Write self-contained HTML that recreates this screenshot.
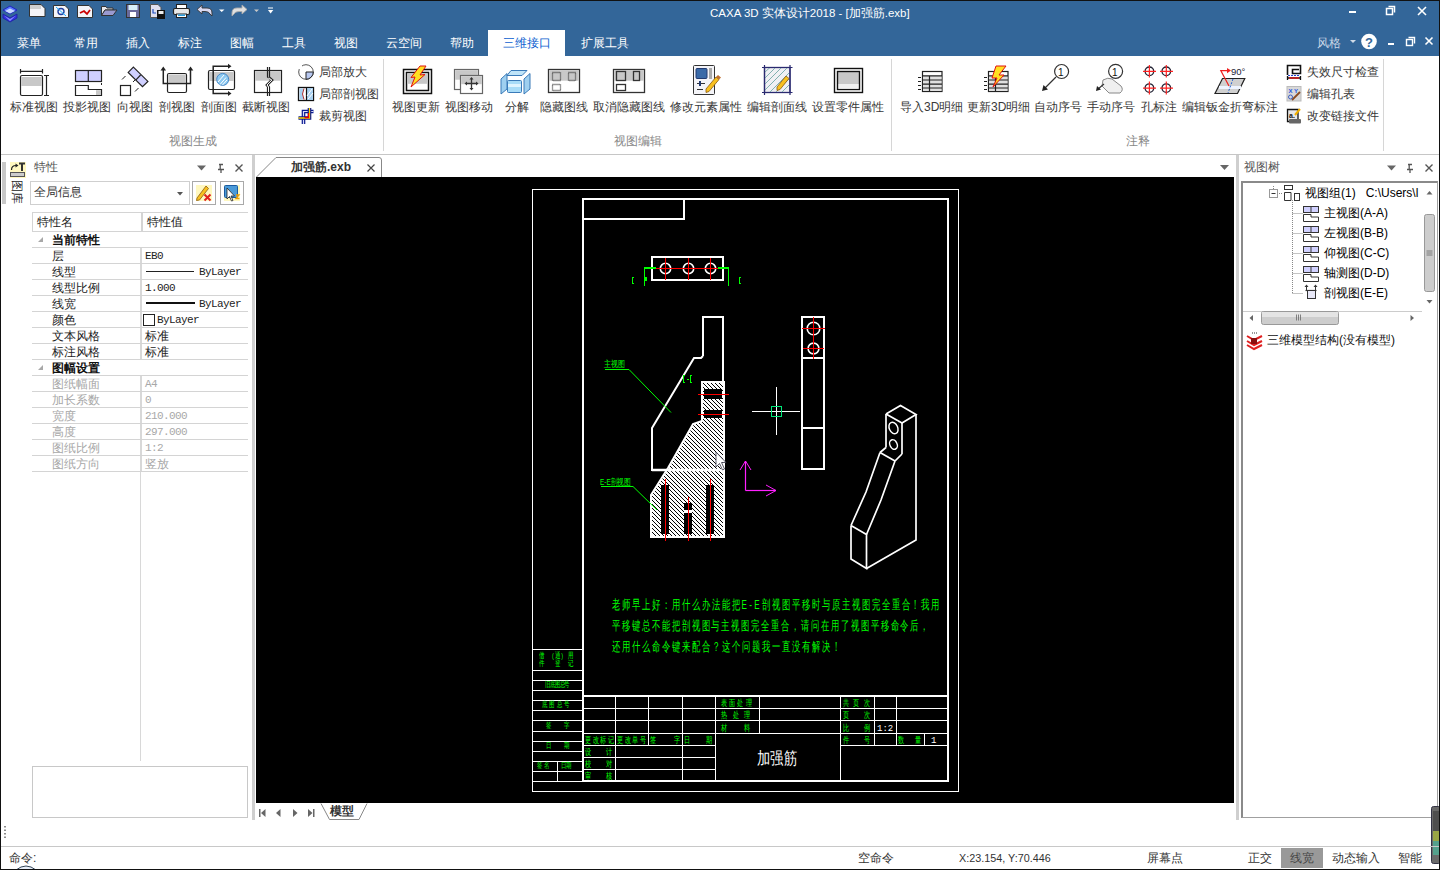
<!DOCTYPE html>
<html><head><meta charset="utf-8">
<style>
*{box-sizing:border-box;margin:0;padding:0}
html,body{width:1440px;height:870px;overflow:hidden;background:#fff;font-family:"Liberation Sans",sans-serif;font-size:12px;color:#333}
.a{position:absolute;white-space:nowrap}
#title{left:0;top:0;width:1440px;height:56px;background:#336699}
.tab{top:36px;height:14px;line-height:14px;color:#fff;font-size:12px}
.rl{top:101px;line-height:13px;color:#383838;font-size:12px;text-align:center}
.sl{line-height:13px;color:#383838;font-size:12px}
.gl{top:135px;line-height:13px;color:#888;font-size:12px}
.vsep{width:1px;background:#d6d6d6;top:59px;height:92px}
.pr{left:32px;width:216px;height:16px;border-bottom:1px solid #d4d4d4}
.pn{position:absolute;left:20px;top:1px;line-height:14px;font-size:12px;color:#222}
.pv{line-height:14px;font-size:11px;letter-spacing:-0.6px;color:#222;font-family:"Liberation Mono",monospace}
.pcol{position:absolute;left:108px;top:0;width:2px;height:16px;background:#d4d4d4}
.dis .pn,.dis .pv{color:#a8a8a8}
.tv{left:1324px;line-height:14px;font-size:12px;color:#000}
.sb{top:851px;line-height:14px;font-size:12px;color:#333}
</style></head><body>
<!-- window border -->

<div class="a" id="title"></div>
<div class="a" style="left:0;top:0;width:1440px;height:1px;background:#111"></div>

<!-- title text -->
<div class="a" style="left:710px;top:6px;line-height:15px;font-size:11.5px;color:#fff">CAXA 3D 实体设计2018 - [加强筋.exb]</div>

<!-- tabs -->
<div class="a tab" style="left:17px">菜单</div>
<div class="a tab" style="left:74px">常用</div>
<div class="a tab" style="left:126px">插入</div>
<div class="a tab" style="left:178px">标注</div>
<div class="a tab" style="left:230px">图幅</div>
<div class="a tab" style="left:282px">工具</div>
<div class="a tab" style="left:334px">视图</div>
<div class="a tab" style="left:386px">云空间</div>
<div class="a tab" style="left:450px">帮助</div>
<div class="a" style="left:488px;top:30px;width:77px;height:27px;background:#fff"></div>
<div class="a tab" style="left:503px;color:#0d5fd0">三维接口</div>
<div class="a tab" style="left:581px">扩展工具</div>
<div class="a tab" style="left:1317px;color:#c9d6e6">风格</div>

<!-- ribbon -->
<div class="a" style="left:1px;top:154px;width:1438px;height:1px;background:#c6c6c6"></div>
<div class="a vsep" style="left:383px"></div>
<div class="a vsep" style="left:891px"></div>
<div class="a vsep" style="left:1383px"></div>

<div class="a rl" style="left:10px;width:48px">标准视图</div>
<div class="a rl" style="left:63px;width:48px">投影视图</div>
<div class="a rl" style="left:117px;width:36px">向视图</div>
<div class="a rl" style="left:159px;width:36px">剖视图</div>
<div class="a rl" style="left:201px;width:36px">剖面图</div>
<div class="a rl" style="left:242px;width:48px">截断视图</div>
<div class="a sl" style="left:319px;top:66px">局部放大</div>
<div class="a sl" style="left:319px;top:88px">局部剖视图</div>
<div class="a sl" style="left:319px;top:110px">裁剪视图</div>

<div class="a rl" style="left:392px;width:48px">视图更新</div>
<div class="a rl" style="left:445px;width:48px">视图移动</div>
<div class="a rl" style="left:505px;width:24px">分解</div>
<div class="a rl" style="left:540px;width:48px">隐藏图线</div>
<div class="a rl" style="left:593px;width:72px">取消隐藏图线</div>
<div class="a rl" style="left:670px;width:72px">修改元素属性</div>
<div class="a rl" style="left:747px;width:60px">编辑剖面线</div>
<div class="a rl" style="left:812px;width:72px">设置零件属性</div>

<div class="a rl" style="left:900px;width:62px">导入3D明细</div>
<div class="a rl" style="left:967px;width:62px">更新3D明细</div>
<div class="a rl" style="left:1034px;width:48px">自动序号</div>
<div class="a rl" style="left:1087px;width:48px">手动序号</div>
<div class="a rl" style="left:1141px;width:36px">孔标注</div>
<div class="a rl" style="left:1182px;width:96px">编辑钣金折弯标注</div>
<div class="a sl" style="left:1307px;top:66px">失效尺寸检查</div>
<div class="a sl" style="left:1307px;top:88px">编辑孔表</div>
<div class="a sl" style="left:1307px;top:110px">改变链接文件</div>

<div class="a gl" style="left:169px">视图生成</div>
<div class="a gl" style="left:614px">视图编辑</div>
<div class="a gl" style="left:1126px">注释</div>

<!--ICONS--><svg class="a" style="left:0;top:0" width="1440" height="180" viewBox="0 0 1440 180">
<!-- QAT logo -->
<g>
<polygon points="3,10 10,6 17,10 10,14" fill="#5a7cff" stroke="#2020c0" stroke-width="1"/>
<polygon points="3,14 10,18 17,14 17,18 10,22 3,18" fill="#3030e0" stroke="#2020a0" stroke-width="0.8"/>
<polygon points="5,11 10,8.5 15,11 10,13.5" fill="#c8d8ff"/>
<polygon points="4,15.5 10,19 16,15.5 10,21" fill="#9090ff"/>
</g>
<!-- new -->
<path d="M29.5,4.5 H41 L45,8.5 V16.5 H29.5 Z" fill="#f4f4f8" stroke="#333" stroke-width="1"/>
<rect x="30" y="5" width="11" height="4" fill="#cfcfcf"/>
<!-- icon2 -->
<path d="M53.5,5.5 H65 L68.5,9 V17.5 H53.5 Z" fill="#f4f4f8" stroke="#333" stroke-width="1"/>
<circle cx="61" cy="11.5" r="3" fill="none" stroke="#2040a0" stroke-width="1.4"/>
<line x1="56" y1="7" x2="66" y2="16" stroke="#20b0ff" stroke-width="1"/>
<!-- icon3 -->
<path d="M77.5,5.5 H89 L92.5,9 V17.5 H77.5 Z" fill="#f4f4f8" stroke="#333" stroke-width="1"/>
<path d="M80,13 L84,11 L87,14 L90,10" fill="none" stroke="#c00" stroke-width="1.8"/>
<!-- open -->
<path d="M101.5,6.5 H106 L107,8 H113 V10 H105 L101.5,15.5 Z" fill="#e8e8ec" stroke="#333" stroke-width="1"/>
<path d="M101.5,15.5 L105,10 H117 L113,15.5 Z" fill="#9a9ad0" stroke="#333" stroke-width="1"/>
<!-- save -->
<rect x="126.5" y="4.5" width="13" height="13" fill="#6a6a9a" stroke="#333" stroke-width="1"/>
<rect x="128.5" y="5" width="9" height="5" fill="#d8f0f8"/>
<rect x="130" y="12" width="6" height="5" fill="#fff"/>
<!-- save as -->
<path d="M150.5,4.5 H158 L161,7.5 V17.5 H150.5 Z" fill="#e0e0f0" stroke="#555" stroke-width="1"/>
<rect x="157" y="10" width="8" height="9" fill="#111"/>
<rect x="158.5" y="11" width="5" height="3" fill="#eee"/>
<path d="M153,9 V13 H156" fill="none" stroke="#2050c0" stroke-width="1.2"/>
<!-- print -->
<rect x="176.5" y="4.5" width="10" height="4" fill="#fff" stroke="#222" stroke-width="1"/>
<rect x="173.5" y="8.5" width="16" height="6" rx="1.5" fill="#e8e8e8" stroke="#222" stroke-width="1.2"/>
<rect x="176.5" y="14" width="10" height="3.5" fill="#fff" stroke="#222" stroke-width="1"/>
<rect x="178" y="14.5" width="7" height="1.5" fill="#2aa0e0"/>
<!-- undo -->
<path d="M197,9.5 L202,5 V8 H207 Q212,8 212,13 V16 L210,14 Q209,11.5 205,11.5 H202 V14 Z" fill="#d8d8f0" stroke="#333" stroke-width="0.9"/>
<polygon points="219,9.5 224.5,9.5 221.7,12" fill="#fff"/>
<!-- redo -->
<path d="M247,9.5 L242,5 V8 H237 Q232,8 232,13 V16 L234,14 Q235,11.5 239,11.5 H242 V14 Z" fill="#e0e0e0" stroke="#aaa" stroke-width="0.9"/>
<polygon points="254,9.5 259,9.5 256.5,12" fill="#c8c8c8"/>
<rect x="268" y="7.5" width="5" height="1" fill="#fff"/>
<polygon points="268,10 273.3,10 270.6,13.5" fill="#fff"/>

<!-- title bar window controls -->
<rect x="1349" y="11" width="7" height="2" fill="#fff"/>
<rect x="1386.5" y="8.5" width="6" height="6" fill="none" stroke="#fff" stroke-width="1.5"/>
<path d="M1388.5,6.5 H1394.5 V12.5" fill="none" stroke="#fff" stroke-width="1.5"/>
<path d="M1418,7 L1426,15 M1426,7 L1418,15" stroke="#fff" stroke-width="1.6"/>
<!-- second row controls -->
<polygon points="1350,40 1356,40 1353,43" fill="#d0dbe8"/>
<circle cx="1369" cy="41.5" r="7.8" fill="#fff"/>
<text x="1365" y="46.5" font-size="13" font-weight="bold" fill="#336699" font-family="Liberation Sans, sans-serif">?</text>
<rect x="1388" y="43" width="6" height="2" fill="#fff"/>
<rect x="1406.5" y="39.5" width="6" height="6" fill="none" stroke="#fff" stroke-width="1.4"/>
<path d="M1408.5,37.5 H1414.5 V43.5" fill="none" stroke="#fff" stroke-width="1.4"/>
<path d="M1425.5,37.5 L1432.5,44.5 M1432.5,37.5 L1425.5,44.5" stroke="#fff" stroke-width="1.6"/>

<!-- ===== ribbon group 1 ===== -->
<!-- 标准视图 -->
<g stroke="#222" stroke-width="1.2" fill="none">
<rect x="20.5" y="75.5" width="22" height="20" rx="1.5" fill="#fff"/>
<rect x="21.2" y="77" width="20.6" height="9" fill="#c8c8c8" stroke="none"/>
<path d="M20.5,71.3 H42.5 M20.5,69 V73.5 M42.5,69 V73.5"/>
<path d="M46.5,75.5 V95.5 M44,75.5 H49 M44,95.5 H49"/>
</g>
<!-- 投影视图 -->
<g stroke="#222" stroke-width="1.2">
<rect x="75.5" y="70.5" width="26" height="11" fill="#d0d0ff"/>
<line x1="88.3" y1="70.5" x2="88.3" y2="81.5"/>
<path d="M75.5,85.5 H88.3 V89.5 H101.5 V95.5 H75.5 Z" fill="#fff"/>
<rect x="96" y="90.2" width="5" height="4.8" fill="#c8c8c8" stroke="none"/>
<path d="M101.5,83 V85" stroke-width="1"/>
</g>
<!-- 向视图 -->
<g stroke="#222" stroke-width="1.2">
<polygon points="133.4,67.1 147.9,81.4 142.5,86.7 128.2,72.4" fill="#d0d0ff"/>
<line x1="140.6" y1="75" x2="136" y2="79.8"/>
<rect x="120.5" y="85.5" width="10" height="10" fill="#fff"/>
<path d="M122,79.5 L125.5,76 M133,82 L135,80 M135,91.5 L138.5,88" stroke-width="1"/>
</g>
<!-- 剖视图 -->
<g stroke="#222" stroke-width="1.2">
<rect x="167.5" y="73.5" width="19" height="19" rx="1.5" fill="#fff"/>
<rect x="168.2" y="74.5" width="17.6" height="8" fill="#c8c8c8" stroke="none"/>
<path d="M163.3,70 V83.5 H190.5 V70" fill="none" stroke-width="1.5"/>
<polygon points="160.5,70.5 163.3,66.5 166,70.5" fill="#222" stroke="none"/>
<polygon points="187.8,70.5 190.5,66.5 193.3,70.5" fill="#222" stroke="none"/>
</g>
<!-- 剖面图 -->
<g stroke="#222" stroke-width="1.2">
<rect x="208.5" y="70.5" width="26" height="19" rx="1.5" fill="#fff"/>
<rect x="209.2" y="72" width="24.6" height="9" fill="#c8c8c8" stroke="none"/>
<circle cx="222.7" cy="79.4" r="6" fill="#8cc8f0" stroke="#4a8ac8" stroke-width="1"/>
<path d="M218,82 L224,75 M220,84.5 L226,77.5 M222.5,85 L227,80" stroke="#fff" stroke-width="1"/>
<path d="M228,66.3 H213.2 V93.5 H228" fill="none" stroke-width="1.5"/>
<polygon points="228,63.8 231.5,66.3 228,68.8" fill="#222" stroke="none"/>
<polygon points="228,91 231.5,93.5 228,96" fill="#222" stroke="none"/>
</g>
<!-- 截断视图 -->
<g stroke="#222" stroke-width="1.2">
<rect x="254.5" y="70.5" width="27" height="22" fill="#fff"/>
<rect x="255.2" y="71.2" width="25.6" height="9.5" fill="#c8c8c8" stroke="none"/>
<path d="M267.5,67 V77 L271,80 L266,85 L267.5,87 V96" fill="none"/>
<path d="M269.5,67 V77 L273,80 L268,85 L269.5,87 V96" fill="none"/>
<path d="M268.2,78 L271.8,80 L267,85 L268.5,87 V92" fill="none" stroke="#fff" stroke-width="1"/>
</g>
<!-- small icons group1 -->
<g>
<circle cx="306" cy="72" r="7.3" fill="#fff" stroke="#555" stroke-width="1"/>
<path d="M306,72 H313.3 A7.3,7.3 0 0 1 306,79.3 Z" fill="#b8c8f0" stroke="#222" stroke-width="1"/>
<rect x="298" y="64" width="4" height="5" fill="#fff"/>
</g>
<g>
<rect x="298.5" y="87.5" width="15" height="13" fill="#fff" stroke="#111" stroke-width="1.3"/>
<path d="M299.5,88.5 H304 Q301,94 304,99.5 H299.5 Z" fill="#a8d0f0"/>
<path d="M304,88.5 Q301,94 304,99.5" fill="none" stroke="#b03030" stroke-width="1"/>
<rect x="307" y="88" width="6" height="12" fill="#a8d0f0"/>
<line x1="306.5" y1="88" x2="306.5" y2="100" stroke="#111" stroke-width="1.2"/>
<path d="M307,96 L312,89 M308,99 L313,93" stroke="#fff" stroke-width="1"/>
</g>
<g>
<path d="M303.5,124 V111.5 H313.5" stroke="#0a1a90" stroke-width="3.6" fill="none"/>
<path d="M303.5,124 V111.5 H313.5" stroke="#d8d8f8" stroke-width="1.2" fill="none"/>
<path d="M298.5,118 H309.5 V108" stroke="#0a1a90" stroke-width="3.6" fill="none"/>
<path d="M298.5,118 H309.5 V108" stroke="#ffd800" stroke-width="1.3" fill="none"/>
<path d="M304.5,117.5 H308.5 V113" stroke="#e00" stroke-width="1.3" fill="none"/>
</g>

<!-- ===== ribbon group 2 ===== -->
<g stroke="#111" stroke-width="1.5">
<rect x="403.5" y="69.5" width="28" height="24" fill="#fff"/>
<rect x="406.5" y="72.5" width="22" height="18" fill="#fff"/>
<rect x="407.3" y="73.3" width="20.5" height="10.5" fill="#c8c8c8" stroke="none"/>
<polygon points="420,66 426,66 420,75 425,74.5 411,87 415,77 411,77.5" fill="#ffe020" stroke="#e01010" stroke-width="1"/>
</g>
<g stroke="#666" stroke-width="1.2">
<rect x="454.5" y="69.5" width="24" height="20" fill="#fff"/>
<rect x="455.2" y="70.2" width="22.6" height="9.5" fill="#c8c8c8" stroke="none"/>
<rect x="460.5" y="75.5" width="22" height="18" fill="#fff"/>
<rect x="461.2" y="76.2" width="20.6" height="8" fill="#c8c8c8" stroke="none"/>
<path d="M471.5,78.5 V89 M466,83.5 H477" stroke="#333" stroke-width="1.3"/>
<polygon points="471.5,77 469.5,79.5 473.5,79.5" fill="#333" stroke="none"/>
<polygon points="471.5,90.5 469.5,88 473.5,88" fill="#333" stroke="none"/>
<polygon points="464.5,83.5 467,81.5 467,85.5" fill="#333" stroke="none"/>
<polygon points="478.5,83.5 476,81.5 476,85.5" fill="#333" stroke="none"/>
</g>
<g stroke="#3a7ab8" stroke-width="1">
<polygon points="501,79 507,73.5 507,89 501,94" fill="#9fd0f0"/>
<polygon points="524,79 530,73.5 530,89 524,94" fill="#9fd0f0"/>
<polygon points="511,70.5 527,70.5 522,75.5 507,75.5" fill="#bfe4f8"/>
<rect x="507.5" y="80.5" width="14" height="12" rx="1" fill="#a8dcf8"/>
<rect x="508" y="84" width="13" height="3" fill="#dff4ff" stroke="none"/>
</g>
<g stroke="#333" stroke-width="1.3">
<rect x="548.5" y="69.5" width="31" height="23" fill="#fff"/>
<rect x="549.2" y="70.2" width="29.6" height="10.5" fill="#c8c8c8" stroke="none"/>
<rect x="552.5" y="72.5" width="8" height="8" fill="none" stroke-dasharray="1,1"/>
<rect x="568.5" y="72.5" width="7" height="8" fill="none" stroke-dasharray="1,1"/>
<rect x="552.5" y="84.5" width="8" height="6" fill="none" stroke-dasharray="1,1"/>
</g>
<g stroke="#333" stroke-width="1.3">
<rect x="613.5" y="69.5" width="31" height="23" fill="#fff"/>
<rect x="614.2" y="70.2" width="29.6" height="10.5" fill="#c8c8c8" stroke="none"/>
<rect x="616.5" y="71.5" width="9" height="9" fill="#c8c8c8"/>
<rect x="633.5" y="71.5" width="6" height="9" fill="#c8c8c8"/>
<rect x="616.5" y="84.5" width="9" height="6" fill="#fff"/>
</g>
<g>
<rect x="693.5" y="65.5" width="21" height="29" rx="1" fill="#f4f4f8" stroke="#333" stroke-width="1"/>
<rect x="696" y="68.5" width="11" height="10" rx="1" fill="#3a6aa8" stroke="#223a70" stroke-width="1"/>
<rect x="709" y="68" width="3" height="11" fill="#aaa"/>
<path d="M697,83.5 H705 M697,89.5 H703" stroke="#333" stroke-width="1"/>
<rect x="699" y="81" width="2" height="5" fill="#223a70"/>
<polygon points="706,89 716,77 719,79.5 709,91.5 706,92.5" fill="#f8c020" stroke="#8a5a10" stroke-width="0.8"/>
<polygon points="716,77 718,75 721,77.5 719,79.5" fill="#c07030"/>
</g>
<g>
<rect x="764.5" y="67.5" width="25.5" height="25" fill="#f0f0f4" stroke="#2a2a70" stroke-width="1.3"/>
<path d="M765,72 L770,67.5 M765,78 L775,68 M765,84 L781,68 M765,90 L787,68 M770,92 L789,73 M776,92 L789,79 M782,92 L789,85" stroke="#80b0b0" stroke-width="1"/>
<path d="M764.5,65 V95 M790,65 V95 M762,67.5 H792.5 M762,92.5 H792.5" stroke="#2a2a70" stroke-width="1.2"/>
<polygon points="777,87 786,76 789,78.5 780,89.5 777,90.5" fill="#f8c020" stroke="#8a5a10" stroke-width="0.8"/>
</g>
<g>
<rect x="834.5" y="68.5" width="28" height="24" fill="#fff" stroke="#111" stroke-width="1.4"/>
<rect x="837.5" y="71.5" width="22" height="18" fill="#c8c8c8" stroke="#111" stroke-width="1.4"/>
<rect x="838.5" y="84" width="20" height="4.8" fill="#f0f0f0"/>
</g>

<!-- ===== ribbon group 3 ===== -->
<g stroke="#222" stroke-width="1.2">
<rect x="922.5" y="71.5" width="19.5" height="20" fill="#fff"/>
<rect x="923" y="76" width="18.5" height="15" fill="#e0e0e0" stroke="none"/>
<path d="M922.5,75.8 H942 M922.5,80 H942 M922.5,84.2 H942 M922.5,88 H942 M929.5,75.8 V91.5"/>
<path d="M918,77.5 H921 M918,81.5 H921 M918,85.5 H921 M918,89.5 H921" stroke-width="1"/>
</g>
<g stroke="#222" stroke-width="1.2">
<rect x="988.5" y="71.5" width="19.5" height="20" fill="#fff"/>
<rect x="989" y="76" width="18.5" height="15" fill="#e0e0e0" stroke="none"/>
<path d="M988.5,75.8 H1008 M988.5,80 H1008 M988.5,84.2 H1008 M988.5,88 H1008 M995.5,75.8 V91.5"/>
<path d="M984,77.5 H987 M984,81.5 H987 M984,85.5 H987 M984,89.5 H987" stroke-width="1"/>
<polygon points="996,66 1006,66 999,75 1004,75 993,87 997,78 992,78" fill="#ffe020" stroke="#e01010" stroke-width="1"/>
</g>
<g>
<circle cx="1061.6" cy="71.5" r="7" fill="#fff" stroke="#333" stroke-width="1.2"/>
<text x="1058" y="76" font-size="10" fill="#111" font-family="Liberation Sans, sans-serif">1</text>
<line x1="1056" y1="77" x2="1045" y2="88" stroke="#333" stroke-width="1.2"/>
<polygon points="1042,91 1043.5,85 1048,89.5" fill="#222"/>
</g>
<g>
<circle cx="1115.6" cy="71.3" r="7" fill="#fff" stroke="#333" stroke-width="1.2"/>
<text x="1112" y="76" font-size="10" fill="#111" font-family="Liberation Sans, sans-serif">1</text>
<path d="M1103,80 Q1108,77 1112,79 L1121,86 Q1124,90 1120,93 H1109 L1102,86 Z" fill="#f0f0f0" stroke="#888" stroke-width="1"/>
<line x1="1104" y1="84" x2="1098" y2="89" stroke="#333" stroke-width="1.2"/>
<polygon points="1096,91 1097,86 1101,89.5" fill="#222"/>
</g>
<g stroke-width="1.3">
<circle cx="1149.4" cy="71.3" r="4.3" fill="none" stroke="#223"/>
<circle cx="1166.3" cy="71.3" r="4.3" fill="none" stroke="#223"/>
<circle cx="1149.4" cy="88.1" r="4.3" fill="none" stroke="#223"/>
<circle cx="1166.3" cy="88.1" r="4.3" fill="none" stroke="#223"/>
<path d="M1143,71.3 H1156 M1149.4,65 V77.5 M1160,71.3 H1173 M1166.3,65 V77.5 M1143,88.1 H1156 M1149.4,81.5 V94.5 M1160,88.1 H1173 M1166.3,81.5 V94.5" stroke="#f22" stroke-width="1.2"/>
</g>
<g>
<polygon points="1222.5,78.5 1244.8,78.5 1237.5,93.5 1215,93.5" fill="#d0d0d0" stroke="#222" stroke-width="1.2"/>
<rect x="1219" y="86" width="22" height="3" fill="#eef4ff"/>
<path d="M1233,79 L1228,93" stroke="#2060d0" stroke-width="1" stroke-dasharray="2,1.5"/>
<path d="M1229,86 L1220.8,70.6 H1228" fill="none" stroke="#f02020" stroke-width="1.2"/>
<polygon points="1227,68 1231,70.6 1227,73.2" fill="#f02020"/>
<text x="1231" y="75" font-size="9.5" fill="#223" font-family="Liberation Sans, sans-serif">90°</text>
</g>
<g>
<path d="M1287.5,75 V65.5 H1300.5 V73.5 H1292.5 V69.5 H1299" fill="none" stroke="#111" stroke-width="1.6"/>
<path d="M1288,75.5 H1300" stroke="#2040d0" stroke-width="1" stroke-dasharray="2,1"/>
<path d="M1287.5,76 V80 M1300.5,76 V80 M1288,78 H1300" stroke="#111" stroke-width="1.3"/>
<path d="M1289,78 H1299" stroke="#f01010" stroke-width="1.3"/>
</g>
<g>
<rect x="1287" y="86.5" width="14" height="14.5" fill="#d8d8d8" stroke="#bbb" stroke-width="1"/>
<text x="1288.5" y="93" font-size="6" font-weight="bold" fill="#2050e0" font-family="Liberation Sans, sans-serif">X Y</text>
<path d="M1292,100 L1300,92" stroke="#8a4a20" stroke-width="1.8"/>
<circle cx="1290.5" cy="97" r="2" fill="none" stroke="#4060c0" stroke-width="1"/>
</g>
<g>
<path d="M1287.5,109.5 H1298 V121.5 H1287.5 Z" fill="#e8e8e8" stroke="#111" stroke-width="1.3"/>
<text x="1289" y="118" font-size="7" font-weight="bold" fill="#111" font-family="Liberation Sans, sans-serif">a.</text>
<rect x="1289" y="119" width="12" height="4.5" rx="1" fill="#666"/>
<path d="M1295,115 L1300,109" stroke="#f0b000" stroke-width="2"/>
</g>

<!-- panel header icons left -->
<polygon points="197,165.5 206,165.5 201.5,170.6" fill="#666"/>
<path d="M219,164.5 H223 M220.2,164.5 V169 M218,169.5 H224 M221,169.5 V173" stroke="#555" stroke-width="1.3" fill="none"/>
<path d="M235.5,164.5 L242.5,171.5 M242.5,164.5 L235.5,171.5" stroke="#555" stroke-width="1.4"/>
<!-- right panel header -->
<polygon points="1387,165.5 1396,165.5 1391.5,170.6" fill="#666"/>
<path d="M1408,164.5 H1412 M1409.2,164.5 V169 M1407,169.5 H1413 M1410,169.5 V173" stroke="#555" stroke-width="1.3" fill="none"/>
<path d="M1425.5,164.5 L1432.5,171.5 M1432.5,164.5 L1425.5,171.5" stroke="#555" stroke-width="1.4"/>
<!-- doc tab dropdown -->
<polygon points="1220,165 1229,165 1224.5,170" fill="#666"/>
</svg>
<!--/ICONS-->
<!-- splitters -->
<div class="a" style="left:252px;top:155px;width:3px;height:665px;background:#cfcfcf"></div>
<div class="a" style="left:1236px;top:155px;width:3px;height:665px;background:#cfcfcf"></div>

<!-- LEFT PANEL -->
<div class="a" style="left:2px;top:162px;width:4px;height:42px;background:#c8c8c8"></div>
<div class="a" style="left:34px;top:160px;line-height:14px;font-size:12px;color:#555">特性</div>
<div class="a" style="left:30px;top:181px;width:160px;height:24px;border:1px solid #cfcfcf;background:#fff"></div>
<div class="a" style="left:34px;top:185px;line-height:14px;font-size:12px;color:#333">全局信息</div>
<div class="a" style="left:192px;top:181px;width:24px;height:24px;border:1px solid #a9a9a9"></div>
<div class="a" style="left:220px;top:181px;width:24px;height:24px;border:1px solid #a9a9a9"></div>

<div class="a" style="left:32px;top:212px;width:216px;height:20px;border:1px solid #d4d4d4;border-right:none"></div>
<div class="a" style="left:141px;top:212px;width:2px;height:20px;background:#d4d4d4"></div>
<div class="a" style="left:37px;top:215px;line-height:14px;font-size:12px;color:#222">特性名</div>
<div class="a" style="left:147px;top:215px;line-height:14px;font-size:12px;color:#222">特性值</div>

<div class="a" style="left:38px;top:237px;width:0;height:0;border-left:5px solid transparent;border-bottom:5px solid #a8a8a8"></div>
<div class="a" style="left:52px;top:233px;line-height:14px;font-weight:bold;color:#111">当前特性</div>
<div class="a" style="left:32px;top:247px;width:216px;height:1px;background:#d4d4d4"></div>
<div class="a" style="left:52px;top:249px;line-height:14px;color:#222">层</div>
<div class="a pv" style="left:145px;top:249px;color:#222">EB0</div>
<div class="a" style="left:140px;top:248px;width:2px;height:16px;background:#d8d8d8"></div>
<div class="a" style="left:32px;top:263px;width:216px;height:1px;background:#d4d4d4"></div>
<div class="a" style="left:52px;top:265px;line-height:14px;color:#222">线型</div>
<div class="a" style="left:146px;top:271px;width:48px;height:1px;background:#222"></div>
<div class="a pv" style="left:199px;top:265px;color:#222">ByLayer</div>
<div class="a" style="left:140px;top:264px;width:2px;height:16px;background:#d8d8d8"></div>
<div class="a" style="left:32px;top:279px;width:216px;height:1px;background:#d4d4d4"></div>
<div class="a" style="left:52px;top:281px;line-height:14px;color:#222">线型比例</div>
<div class="a pv" style="left:145px;top:281px;color:#222">1.000</div>
<div class="a" style="left:140px;top:280px;width:2px;height:16px;background:#d8d8d8"></div>
<div class="a" style="left:32px;top:295px;width:216px;height:1px;background:#d4d4d4"></div>
<div class="a" style="left:52px;top:297px;line-height:14px;color:#222">线宽</div>
<div class="a" style="left:146px;top:302px;width:49px;height:2px;background:#111"></div>
<div class="a pv" style="left:199px;top:297px;color:#222">ByLayer</div>
<div class="a" style="left:140px;top:296px;width:2px;height:16px;background:#d8d8d8"></div>
<div class="a" style="left:32px;top:311px;width:216px;height:1px;background:#d4d4d4"></div>
<div class="a" style="left:52px;top:313px;line-height:14px;color:#222">颜色</div>
<div class="a" style="left:143px;top:314px;width:12px;height:12px;border:1px solid #222"></div>
<div class="a pv" style="left:157px;top:313px;color:#222">ByLayer</div>
<div class="a" style="left:140px;top:312px;width:2px;height:16px;background:#d8d8d8"></div>
<div class="a" style="left:32px;top:327px;width:216px;height:1px;background:#d4d4d4"></div>
<div class="a" style="left:52px;top:329px;line-height:14px;color:#222">文本风格</div>
<div class="a" style="left:145px;top:329px;line-height:14px;color:#222">标准</div>
<div class="a" style="left:140px;top:328px;width:2px;height:16px;background:#d8d8d8"></div>
<div class="a" style="left:32px;top:343px;width:216px;height:1px;background:#d4d4d4"></div>
<div class="a" style="left:52px;top:345px;line-height:14px;color:#222">标注风格</div>
<div class="a" style="left:145px;top:345px;line-height:14px;color:#222">标准</div>
<div class="a" style="left:140px;top:344px;width:2px;height:16px;background:#d8d8d8"></div>
<div class="a" style="left:32px;top:359px;width:216px;height:1px;background:#d4d4d4"></div>
<div class="a" style="left:38px;top:365px;width:0;height:0;border-left:5px solid transparent;border-bottom:5px solid #a8a8a8"></div>
<div class="a" style="left:52px;top:361px;line-height:14px;font-weight:bold;color:#111">图幅设置</div>
<div class="a" style="left:32px;top:375px;width:216px;height:1px;background:#d4d4d4"></div>
<div class="a" style="left:52px;top:377px;line-height:14px;color:#a8a8a8">图纸幅面</div>
<div class="a pv" style="left:145px;top:377px;color:#a8a8a8">A4</div>
<div class="a" style="left:140px;top:376px;width:2px;height:16px;background:#d8d8d8"></div>
<div class="a" style="left:32px;top:391px;width:216px;height:1px;background:#d4d4d4"></div>
<div class="a" style="left:52px;top:393px;line-height:14px;color:#a8a8a8">加长系数</div>
<div class="a pv" style="left:145px;top:393px;color:#a8a8a8">0</div>
<div class="a" style="left:140px;top:392px;width:2px;height:16px;background:#d8d8d8"></div>
<div class="a" style="left:32px;top:407px;width:216px;height:1px;background:#d4d4d4"></div>
<div class="a" style="left:52px;top:409px;line-height:14px;color:#a8a8a8">宽度</div>
<div class="a pv" style="left:145px;top:409px;color:#a8a8a8">210.000</div>
<div class="a" style="left:140px;top:408px;width:2px;height:16px;background:#d8d8d8"></div>
<div class="a" style="left:32px;top:423px;width:216px;height:1px;background:#d4d4d4"></div>
<div class="a" style="left:52px;top:425px;line-height:14px;color:#a8a8a8">高度</div>
<div class="a pv" style="left:145px;top:425px;color:#a8a8a8">297.000</div>
<div class="a" style="left:140px;top:424px;width:2px;height:16px;background:#d8d8d8"></div>
<div class="a" style="left:32px;top:439px;width:216px;height:1px;background:#d4d4d4"></div>
<div class="a" style="left:52px;top:441px;line-height:14px;color:#a8a8a8">图纸比例</div>
<div class="a pv" style="left:145px;top:441px;color:#a8a8a8">1:2</div>
<div class="a" style="left:140px;top:440px;width:2px;height:16px;background:#d8d8d8"></div>
<div class="a" style="left:32px;top:455px;width:216px;height:1px;background:#d4d4d4"></div>
<div class="a" style="left:52px;top:457px;line-height:14px;color:#a8a8a8">图纸方向</div>
<div class="a" style="left:145px;top:457px;line-height:14px;color:#a8a8a8">竖放</div>
<div class="a" style="left:140px;top:456px;width:2px;height:16px;background:#d8d8d8"></div>
<div class="a" style="left:32px;top:471px;width:216px;height:1px;background:#d4d4d4"></div>
<div class="a" style="left:140px;top:472px;width:1px;height:289px;background:#d8d8d8"></div>

<div class="a" style="left:32px;top:766px;width:216px;height:52px;border:1px solid #c8c8c8"></div>

<!-- DOC AREA -->
<div class="a" style="left:256px;top:177px;width:978px;height:626px;background:#000"></div>

<!--DRAW--><svg class="a" style="left:256px;top:177px" width="978" height="626" viewBox="256 177 978 626" font-family="Liberation Sans, sans-serif">
<defs><pattern id="hp" x="0" y="0" width="4" height="4" patternUnits="userSpaceOnUse"><rect width="4" height="4" fill="#fff"/><rect x="0" y="0" width="1" height="1" fill="#000"/><rect x="1" y="1" width="1" height="1" fill="#000"/><rect x="2" y="2" width="1" height="1" fill="#000"/><rect x="3" y="3" width="1" height="1" fill="#000"/></pattern></defs>
<g shape-rendering="crispEdges">
<rect x="532.5" y="189.5" width="426" height="602" fill="none" stroke="#fff" stroke-width="1"/>
<rect x="583" y="199" width="365" height="582" fill="none" stroke="#fff" stroke-width="2"/>
<line x1="584" y1="219" x2="684" y2="219" stroke="#fff" stroke-width="2" />
<line x1="684" y1="198" x2="684" y2="220" stroke="#fff" stroke-width="2" />
<line x1="532" y1="649.5" x2="582" y2="649.5" stroke="#fff" stroke-width="1" />
<line x1="532" y1="670.5" x2="582" y2="670.5" stroke="#fff" stroke-width="1" />
<line x1="532" y1="680.5" x2="582" y2="680.5" stroke="#fff" stroke-width="1" />
<line x1="532" y1="690.5" x2="582" y2="690.5" stroke="#fff" stroke-width="1" />
<line x1="532" y1="700.5" x2="582" y2="700.5" stroke="#fff" stroke-width="1" />
<line x1="532" y1="710.5" x2="582" y2="710.5" stroke="#fff" stroke-width="1" />
<line x1="532" y1="720.5" x2="582" y2="720.5" stroke="#fff" stroke-width="1" />
<line x1="532" y1="731.5" x2="582" y2="731.5" stroke="#fff" stroke-width="1" />
<line x1="532" y1="741.5" x2="582" y2="741.5" stroke="#fff" stroke-width="1" />
<line x1="532" y1="751.5" x2="582" y2="751.5" stroke="#fff" stroke-width="1" />
<line x1="532" y1="761.5" x2="582" y2="761.5" stroke="#fff" stroke-width="1" />
<line x1="532" y1="771.5" x2="582" y2="771.5" stroke="#fff" stroke-width="1" />
<line x1="557.5" y1="761" x2="557.5" y2="781" stroke="#fff" stroke-width="1" />
<line x1="532" y1="781.5" x2="582" y2="781.5" stroke="#fff" stroke-width="1" />
<line x1="584" y1="696" x2="947" y2="696" stroke="#fff" stroke-width="2" />
<line x1="584" y1="708.5" x2="947" y2="708.5" stroke="#fff" stroke-width="1" />
<line x1="584" y1="720.5" x2="947" y2="720.5" stroke="#fff" stroke-width="1" />
<line x1="584" y1="733.5" x2="947" y2="733.5" stroke="#fff" stroke-width="1" />
<line x1="584" y1="745.5" x2="715" y2="745.5" stroke="#fff" stroke-width="1" />
<line x1="584" y1="757.5" x2="715" y2="757.5" stroke="#fff" stroke-width="1" />
<line x1="584" y1="769.5" x2="715" y2="769.5" stroke="#fff" stroke-width="1" />
<line x1="840" y1="745.5" x2="947" y2="745.5" stroke="#fff" stroke-width="1" />
<line x1="615.5" y1="696" x2="615.5" y2="780" stroke="#fff" stroke-width="1" />
<line x1="648.5" y1="696" x2="648.5" y2="745.5" stroke="#fff" stroke-width="1" />
<line x1="682.5" y1="696" x2="682.5" y2="780" stroke="#fff" stroke-width="1" />
<line x1="715.5" y1="696" x2="715.5" y2="780" stroke="#fff" stroke-width="1" />
<line x1="759.5" y1="696" x2="759.5" y2="733" stroke="#fff" stroke-width="1" />
<line x1="840.5" y1="696" x2="840.5" y2="780" stroke="#fff" stroke-width="1" />
<line x1="874.5" y1="696" x2="874.5" y2="745.5" stroke="#fff" stroke-width="1" />
<line x1="896.5" y1="696" x2="896.5" y2="745.5" stroke="#fff" stroke-width="1" />
<line x1="924.5" y1="733" x2="924.5" y2="745.5" stroke="#fff" stroke-width="1" />
</g>
<rect x="652" y="257" width="71" height="23" fill="none" stroke="#fff" stroke-width="2" shape-rendering="crispEdges"/>
<circle cx="665.5" cy="268.5" r="5.2" fill="none" stroke="#fff" stroke-width="1.6"/>
<circle cx="688.5" cy="268.5" r="5.2" fill="none" stroke="#fff" stroke-width="1.6"/>
<circle cx="710.5" cy="268.5" r="5.2" fill="none" stroke="#fff" stroke-width="1.6"/>
<g shape-rendering="crispEdges">
<line x1="656" y1="268.5" x2="718" y2="268.5" stroke="#ff0000" stroke-width="1" />
<line x1="665.5" y1="258" x2="665.5" y2="280" stroke="#ff0000" stroke-width="1" />
<line x1="688.5" y1="258" x2="688.5" y2="280" stroke="#ff0000" stroke-width="1" />
<line x1="710.5" y1="258" x2="710.5" y2="280" stroke="#ff0000" stroke-width="1" />
<line x1="644" y1="268" x2="656" y2="268" stroke="#00ff00" stroke-width="2.5" />
<line x1="718" y1="268" x2="729" y2="268" stroke="#00ff00" stroke-width="2.5" />
<line x1="644.5" y1="267" x2="644.5" y2="286" stroke="#00ff00" stroke-width="1.5" />
<line x1="728.5" y1="267" x2="728.5" y2="286" stroke="#00ff00" stroke-width="1.5" />
</g>
<path d="M634,277.5 H632.5 V283.5 H634 M741,277.5 H739.5 V283.5 H741" fill="none" stroke="#00ff00" stroke-width="1" shape-rendering="crispEdges"/>
<rect x="645" y="277" width="2" height="4" fill="#00ff00"/>
<polyline points="703,356 703,317 723,317 723,382" fill="none" stroke="#fff" stroke-width="2" stroke-linejoin="miter" />
<polyline points="703,356 701,358 694,358 652,428 652,470 723,470" fill="none" stroke="#fff" stroke-width="2" stroke-linejoin="miter" />
<polygon points="702,382 724,382 724,537 651,537 651,495 668,468 693,424 702,421" fill="url(#hp)" stroke="#fff" stroke-width="2" stroke-linejoin="miter" />
<line x1="652" y1="470" x2="723" y2="470" stroke="#fff" stroke-width="2.5" />
<g shape-rendering="crispEdges">
<rect x="704" y="389" width="18" height="10" fill="#000"/>
<rect x="704" y="410" width="18" height="8" fill="#000"/>
<rect x="661" y="485" width="8" height="49" fill="#000"/>
<rect x="706" y="485" width="8" height="49" fill="#000"/>
<rect x="684" y="503" width="8" height="31" fill="#000"/>
<rect x="684" y="510" width="8" height="3" fill="#fff"/>
<line x1="698" y1="394.5" x2="729" y2="394.5" stroke="#ff0000" stroke-width="1" />
<line x1="698" y1="414.5" x2="729" y2="414.5" stroke="#ff0000" stroke-width="1" />
<line x1="665.5" y1="479" x2="665.5" y2="541" stroke="#ff0000" stroke-width="1" />
<line x1="688.5" y1="497" x2="688.5" y2="541" stroke="#ff0000" stroke-width="1" />
<line x1="710.5" y1="479" x2="710.5" y2="541" stroke="#ff0000" stroke-width="1" />
</g>
<line x1="605" y1="369.5" x2="629" y2="369.5" stroke="#00ff00" stroke-width="1.5" shape-rendering="crispEdges"/>
<line x1="629" y1="369.5" x2="671" y2="412.5" stroke="#00ff00" stroke-width="1" />
<line x1="601" y1="486.5" x2="633" y2="486.5" stroke="#00ff00" stroke-width="1.5" shape-rendering="crispEdges"/>
<line x1="633" y1="486.5" x2="657" y2="510" stroke="#00ff00" stroke-width="1" />
<text x="604" y="367" font-size="8.5" fill="#00ff00" textLength="21" lengthAdjust="spacingAndGlyphs" >主视图</text>
<text x="600" y="485" font-size="8.5" fill="#00ff00" textLength="31" lengthAdjust="spacingAndGlyphs" >E-E剖视图</text>
<path d="M685,375.5 H683.5 V382.5 H685 M687,379.5 H689 M692,375.5 H690.5 V382.5 H692" fill="none" stroke="#00ff00" stroke-width="1.2" shape-rendering="crispEdges"/>
<g shape-rendering="crispEdges">
<line x1="776.5" y1="387" x2="776.5" y2="435" stroke="#fff" stroke-width="1" />
<line x1="752" y1="411.5" x2="800" y2="411.5" stroke="#fff" stroke-width="1" />
<rect x="771.5" y="406.5" width="10" height="10" fill="none" stroke="#00e87a" stroke-width="1"/>
<rect x="802" y="317" width="22" height="152" fill="none" stroke="#fff" stroke-width="2"/>
<line x1="802" y1="358" x2="824" y2="358" stroke="#fff" stroke-width="2" />
<line x1="802" y1="428" x2="824" y2="428" stroke="#fff" stroke-width="2" />
</g>
<circle cx="813.5" cy="328.5" r="6.3" fill="none" stroke="#fff" stroke-width="1.6"/>
<circle cx="813.5" cy="348.5" r="5.4" fill="none" stroke="#fff" stroke-width="1.6"/>
<g shape-rendering="crispEdges">
<line x1="813.5" y1="317" x2="813.5" y2="359" stroke="#ff0000" stroke-width="1" />
<line x1="802" y1="328.5" x2="825" y2="328.5" stroke="#ff0000" stroke-width="1" />
<line x1="803" y1="348.5" x2="824" y2="348.5" stroke="#ff0000" stroke-width="1" />
</g>
<line x1="745.5" y1="461" x2="745.5" y2="490.5" stroke="#ff20ff" stroke-width="1.2" />
<line x1="745.5" y1="490.5" x2="776" y2="490.5" stroke="#ff20ff" stroke-width="1.2" />
<line x1="745.5" y1="461" x2="740" y2="470" stroke="#ff20ff" stroke-width="1" />
<line x1="745.5" y1="461" x2="751" y2="470" stroke="#ff20ff" stroke-width="1" />
<line x1="776" y1="490.5" x2="766" y2="485" stroke="#ff20ff" stroke-width="1" />
<line x1="776" y1="490.5" x2="766" y2="496" stroke="#ff20ff" stroke-width="1" />
<polyline points="886,414 900.5,405.5 916,414.5 902,423 886,414" fill="none" stroke="#fff" stroke-width="1.7" stroke-linejoin="miter" />
<line x1="886" y1="414" x2="886" y2="447.5" stroke="#fff" stroke-width="1.7" />
<line x1="902" y1="423" x2="902" y2="454" stroke="#fff" stroke-width="1.7" />
<line x1="902" y1="454" x2="895" y2="461" stroke="#fff" stroke-width="1.7" />
<line x1="886" y1="447.5" x2="880" y2="452.5" stroke="#fff" stroke-width="1.7" />
<line x1="880" y1="452.5" x2="895" y2="461" stroke="#fff" stroke-width="1.7" />
<polyline points="880,452.5 866,492 851,525.5" fill="none" stroke="#fff" stroke-width="1.7" stroke-linejoin="miter" />
<polyline points="895,461 881,500 866.5,534.5" fill="none" stroke="#fff" stroke-width="1.7" stroke-linejoin="miter" />
<polyline points="851,525.5 866.5,534.5 866.5,568.5 851,559 851,525.5" fill="none" stroke="#fff" stroke-width="1.7" stroke-linejoin="miter" />
<polyline points="916,414.5 916,540 866.5,568.5" fill="none" stroke="#fff" stroke-width="1.7" stroke-linejoin="miter" />
<ellipse cx="893.5" cy="428" rx="4.2" ry="6" transform="rotate(-25 893.5 428)" fill="none" stroke="#fff" stroke-width="1.5"/>
<ellipse cx="893.5" cy="444.5" rx="3.6" ry="5" transform="rotate(-25 893.5 444.5)" fill="none" stroke="#fff" stroke-width="1.5"/>
<polygon points="716,452 716,467 719.5,463.5 722.5,470 724.5,469 721.5,462.5 726,462.5" fill="#fff" stroke="#334" stroke-width="0.8"/>
<text x="612" y="609" font-size="10" fill="#00ff00" transform="translate(612,609) scale(0.8,1.25) translate(-612,-609)" textLength="408.8" lengthAdjust="spacing">老师早上好：用什么办法能把E-E剖视图平移时与原主视图完全重合！我用</text>
<text x="612" y="630" font-size="10" fill="#00ff00" transform="translate(612,630) scale(0.8,1.25) translate(-612,-630)" textLength="395.0" lengthAdjust="spacing">平移键总不能把剖视图与主视图完全重合，请问在用了视图平移命令后，</text>
<text x="612" y="651" font-size="10" fill="#00ff00" transform="translate(612,651) scale(0.8,1.25) translate(-612,-651)" textLength="285.0" lengthAdjust="spacing">还用什么命令键来配合？这个问题我一直没有解决！</text>
<text x="585" y="742.7" font-size="9.0" fill="#00ff00" transform="translate(585,0) scale(0.68,1) translate(-585,0)" textLength="42.6" lengthAdjust="spacing">更改标记</text>
<text x="617" y="742.7" font-size="9.0" fill="#00ff00" transform="translate(617,0) scale(0.68,1) translate(-617,0)" textLength="42.6" lengthAdjust="spacing">更改单号</text>
<text x="650" y="742.7" font-size="9.0" fill="#00ff00" transform="translate(650,0) scale(0.68,1) translate(-650,0)" textLength="8.5" lengthAdjust="spacing">签</text>
<text x="674" y="742.7" font-size="9.0" fill="#00ff00" transform="translate(674,0) scale(0.68,1) translate(-674,0)" textLength="8.5" lengthAdjust="spacing">字</text>
<text x="684" y="742.7" font-size="9.0" fill="#00ff00" transform="translate(684,0) scale(0.68,1) translate(-684,0)" textLength="8.5" lengthAdjust="spacing">日</text>
<text x="706" y="742.7" font-size="9.0" fill="#00ff00" transform="translate(706,0) scale(0.68,1) translate(-706,0)" textLength="8.5" lengthAdjust="spacing">期</text>
<text x="585" y="754.7" font-size="9.0" fill="#00ff00" transform="translate(585,0) scale(0.68,1) translate(-585,0)" textLength="8.5" lengthAdjust="spacing">设</text>
<text x="606" y="754.7" font-size="9.0" fill="#00ff00" transform="translate(606,0) scale(0.68,1) translate(-606,0)" textLength="8.5" lengthAdjust="spacing">计</text>
<text x="585" y="766.7" font-size="9.0" fill="#00ff00" transform="translate(585,0) scale(0.68,1) translate(-585,0)" textLength="8.5" lengthAdjust="spacing">校</text>
<text x="606" y="766.7" font-size="9.0" fill="#00ff00" transform="translate(606,0) scale(0.68,1) translate(-606,0)" textLength="8.5" lengthAdjust="spacing">对</text>
<text x="585" y="778.7" font-size="9.0" fill="#00ff00" transform="translate(585,0) scale(0.68,1) translate(-585,0)" textLength="8.5" lengthAdjust="spacing">审</text>
<text x="606" y="778.7" font-size="9.0" fill="#00ff00" transform="translate(606,0) scale(0.68,1) translate(-606,0)" textLength="8.5" lengthAdjust="spacing">核</text>
<text x="721" y="705.7" font-size="9.0" fill="#00ff00" transform="translate(721,0) scale(0.68,1) translate(-721,0)" textLength="45.6" lengthAdjust="spacing">表面处理</text>
<text x="721" y="717.7" font-size="9.0" fill="#00ff00" transform="translate(721,0) scale(0.68,1) translate(-721,0)" textLength="8.5" lengthAdjust="spacing">热</text>
<text x="733" y="717.7" font-size="9.0" fill="#00ff00" transform="translate(733,0) scale(0.68,1) translate(-733,0)" textLength="8.5" lengthAdjust="spacing">处</text>
<text x="744" y="717.7" font-size="9.0" fill="#00ff00" transform="translate(744,0) scale(0.68,1) translate(-744,0)" textLength="8.5" lengthAdjust="spacing">理</text>
<text x="721" y="730.7" font-size="9.0" fill="#00ff00" transform="translate(721,0) scale(0.68,1) translate(-721,0)" textLength="8.5" lengthAdjust="spacing">材</text>
<text x="744" y="730.7" font-size="9.0" fill="#00ff00" transform="translate(744,0) scale(0.68,1) translate(-744,0)" textLength="8.5" lengthAdjust="spacing">料</text>
<text x="843" y="705.7" font-size="9.0" fill="#00ff00" transform="translate(843,0) scale(0.68,1) translate(-843,0)" textLength="8.5" lengthAdjust="spacing">共</text>
<text x="853" y="705.7" font-size="9.0" fill="#00ff00" transform="translate(853,0) scale(0.68,1) translate(-853,0)" textLength="8.5" lengthAdjust="spacing">页</text>
<text x="864" y="705.7" font-size="9.0" fill="#00ff00" transform="translate(864,0) scale(0.68,1) translate(-864,0)" textLength="8.5" lengthAdjust="spacing">次</text>
<text x="843" y="717.7" font-size="9.0" fill="#00ff00" transform="translate(843,0) scale(0.68,1) translate(-843,0)" textLength="8.5" lengthAdjust="spacing">页</text>
<text x="864" y="717.7" font-size="9.0" fill="#00ff00" transform="translate(864,0) scale(0.68,1) translate(-864,0)" textLength="8.5" lengthAdjust="spacing">次</text>
<text x="843" y="730.7" font-size="9.0" fill="#00ff00" transform="translate(843,0) scale(0.68,1) translate(-843,0)" textLength="8.5" lengthAdjust="spacing">比</text>
<text x="864" y="730.7" font-size="9.0" fill="#00ff00" transform="translate(864,0) scale(0.68,1) translate(-864,0)" textLength="8.5" lengthAdjust="spacing">例</text>
<text x="843" y="742.7" font-size="9.0" fill="#00ff00" transform="translate(843,0) scale(0.68,1) translate(-843,0)" textLength="8.5" lengthAdjust="spacing">件</text>
<text x="864" y="742.7" font-size="9.0" fill="#00ff00" transform="translate(864,0) scale(0.68,1) translate(-864,0)" textLength="8.5" lengthAdjust="spacing">号</text>
<text x="898" y="742.7" font-size="9.0" fill="#00ff00" transform="translate(898,0) scale(0.68,1) translate(-898,0)" textLength="8.5" lengthAdjust="spacing">数</text>
<text x="915" y="742.7" font-size="9.0" fill="#00ff00" transform="translate(915,0) scale(0.68,1) translate(-915,0)" textLength="8.5" lengthAdjust="spacing">量</text>
<text x="877" y="731" font-size="9" fill="#fff" font-family="Liberation Mono, monospace">1:2</text>
<text x="931" y="743" font-size="9" fill="#fff" font-family="Liberation Mono, monospace">1</text>
<text x="757" y="764" font-size="17" fill="#fff" textLength="40" lengthAdjust="spacingAndGlyphs" >加强筋</text>
<text x="539" y="657.7" font-size="8.0" fill="#00ff00" transform="translate(539,0) scale(0.68,1) translate(-539,0)" textLength="7.5" lengthAdjust="spacing">借</text>
<text x="552" y="657.7" font-size="8.0" fill="#00ff00" transform="translate(552,0) scale(0.68,1) translate(-552,0)" textLength="16.2" lengthAdjust="spacing">(通)</text>
<text x="568" y="657.7" font-size="8.0" fill="#00ff00" transform="translate(568,0) scale(0.68,1) translate(-568,0)" textLength="7.5" lengthAdjust="spacing">用</text>
<text x="539" y="665.7" font-size="8.0" fill="#00ff00" transform="translate(539,0) scale(0.68,1) translate(-539,0)" textLength="7.5" lengthAdjust="spacing">件</text>
<text x="555" y="665.7" font-size="8.0" fill="#00ff00" transform="translate(555,0) scale(0.68,1) translate(-555,0)" textLength="7.5" lengthAdjust="spacing">登</text>
<text x="568" y="665.7" font-size="8.0" fill="#00ff00" transform="translate(568,0) scale(0.68,1) translate(-568,0)" textLength="7.5" lengthAdjust="spacing">记</text>
<text x="545" y="686.7" font-size="8.0" fill="#00ff00" transform="translate(545,0) scale(0.68,1) translate(-545,0)" textLength="36.8" lengthAdjust="spacing">旧底图总号</text>
<text x="542" y="706.7" font-size="8.0" fill="#00ff00" transform="translate(542,0) scale(0.68,1) translate(-542,0)" textLength="41.2" lengthAdjust="spacing">底图总号</text>
<text x="546" y="727.7" font-size="8.0" fill="#00ff00" transform="translate(546,0) scale(0.68,1) translate(-546,0)" textLength="7.5" lengthAdjust="spacing">签</text>
<text x="564" y="727.7" font-size="8.0" fill="#00ff00" transform="translate(564,0) scale(0.68,1) translate(-564,0)" textLength="7.5" lengthAdjust="spacing">字</text>
<text x="546" y="747.7" font-size="8.0" fill="#00ff00" transform="translate(546,0) scale(0.68,1) translate(-546,0)" textLength="7.5" lengthAdjust="spacing">日</text>
<text x="564" y="747.7" font-size="8.0" fill="#00ff00" transform="translate(564,0) scale(0.68,1) translate(-564,0)" textLength="7.5" lengthAdjust="spacing">期</text>
<text x="537" y="767.7" font-size="8.0" fill="#00ff00" transform="translate(537,0) scale(0.68,1) translate(-537,0)" textLength="19.1" lengthAdjust="spacing">签名</text>
<text x="561" y="767.7" font-size="8.0" fill="#00ff00" transform="translate(561,0) scale(0.68,1) translate(-561,0)" textLength="16.2" lengthAdjust="spacing">日期</text>
</svg><!--/DRAW-->
<!-- RIGHT PANEL -->
<div class="a" style="left:1244px;top:160px;line-height:14px;font-size:12px;color:#555">视图树</div>
<div class="a" style="left:1241px;top:181px;width:197px;height:637px;border:1px solid #a0a0a0;border-top:2px solid #8a8a8a;border-left:2px solid #8a8a8a"></div>

<!--EXTRA--><svg class="a" style="left:0;top:150px" width="1440" height="720" viewBox="0 150 1440 720" font-family="Liberation Sans, sans-serif">
<!-- left side tab icon -->
<rect x="10" y="162" width="16" height="16" fill="#fff8c0"/>
<path d="M11.5,170 Q11.5,165.5 16,165.5" fill="none" stroke="#222" stroke-width="1.2"/>
<polygon points="15.5,163.5 18.5,165.5 15.5,167.5" fill="#222"/>
<path d="M19,163.5 H25 M22,163.5 V171" stroke="#333" stroke-width="2"/>
<rect x="10.5" y="172.5" width="14" height="4" fill="#ccc" stroke="#555" stroke-width="1"/>
<text x="11" y="190" font-size="12" fill="#222" transform="rotate(90 17 185.5)">图</text>
<text x="11" y="202" font-size="12" fill="#222" transform="rotate(90 17 197.5)">库</text>
<!-- combo arrow -->
<polygon points="177,192 183,192 180,195.5" fill="#555"/>
<!-- button1 icon -->
<rect x="196" y="185" width="16" height="16" fill="#fff8c0"/>
<polygon points="197,198 206,186 208.5,188.5 199.5,200 196.5,200.5" fill="#f8c020" stroke="#8a5a10" stroke-width="0.8"/>
<path d="M204.5,194.5 L210.5,200.5 M210.5,194.5 L204.5,200.5" stroke="#e02020" stroke-width="2"/>
<!-- button2 icon -->
<rect x="224" y="185" width="16" height="16" fill="#fff8c0"/>
<rect x="224.5" y="185.5" width="13" height="12" rx="1" fill="#4a9ad8" stroke="#1a5aa0" stroke-width="1"/>
<polygon points="227,188 227,199 229.5,196.5 231.5,201 233,200.5 231,196 234.5,196" fill="#fff" stroke="#222" stroke-width="0.8"/>
<path d="M236,195 L239,195 L236,198.5 L239.5,198.5" fill="none" stroke="#f0a000" stroke-width="1.3"/>

<!-- doc tab -->
<path d="M256.5,177 L276,157.5 H379 Q381.5,157.5 381.5,160 V177" fill="#fff" stroke="#888" stroke-width="1"/>
<path d="M367.5,164.5 L374.5,171.5 M374.5,164.5 L367.5,171.5" stroke="#444" stroke-width="1.2"/>

<!-- bottom nav -->
<g fill="#666">
<rect x="259" y="809" width="1.5" height="8"/><polygon points="265.5,809 265.5,817 261,813"/>
<polygon points="280.5,809 280.5,817 276,813"/>
<polygon points="293,809 293,817 297.5,813"/>
<polygon points="308,809 308,817 312.5,813"/><rect x="313" y="809" width="1.5" height="8"/>
</g>
<path d="M321,803.5 L329.5,819.5 H359 L367,803.5" fill="#fff" stroke="#888" stroke-width="1"/>

<!-- right tree -->
<!-- v scrollbar -->
<rect x="1422" y="183" width="15" height="128" fill="#fff"/>
<polygon points="1426.5,194.5 1432.5,194.5 1429.5,191" fill="#666"/>
<rect x="1424.5" y="214.5" width="10" height="77" rx="2" fill="#cdcdcd" stroke="#999" stroke-width="1"/>
<path d="M1426.5,251 H1432.5 M1426.5,253 H1432.5 M1426.5,255 H1432.5" stroke="#666" stroke-width="0.8"/>
<polygon points="1426.5,300 1432.5,300 1429.5,303.5" fill="#666"/>
<!-- h scrollbar -->
<rect x="1243" y="311" width="179" height="1" fill="#ccc"/>
<polygon points="1253,315 1253,321 1249.5,318" fill="#666"/>
<rect x="1261.5" y="311.5" width="77" height="13" rx="2" fill="#cdcdcd" stroke="#999" stroke-width="1"/>
<rect x="1262" y="312" width="76" height="5" fill="#e4e4e4"/>
<path d="M1296.5,314.5 V320.5 M1298.5,314.5 V320.5 M1300.5,314.5 V320.5" stroke="#666" stroke-width="0.8"/>
<polygon points="1410.5,315 1410.5,321 1414,318" fill="#666"/>
<!-- tree lines -->
<path d="M1292.5,200 V293 M1292.5,213.5 H1303 M1292.5,233.5 H1303 M1292.5,253.5 H1303 M1292.5,273.5 H1303 M1292.5,293.5 H1303" stroke="#888" stroke-width="1" stroke-dasharray="1,1"/>
<path d="M1279,193.5 H1283 M1273.5,186 V190" stroke="#888" stroke-width="1" stroke-dasharray="1,1"/>
<rect x="1269.5" y="189.5" width="8" height="8" fill="#fff" stroke="#999" stroke-width="1"/>
<path d="M1271.5,193.5 H1275.5" stroke="#333" stroke-width="1"/>
<!-- group icon -->
<rect x="1284.5" y="185.5" width="8" height="4" fill="#fff" stroke="#333" stroke-width="1"/>
<path d="M1284.5,192.5 H1291 V200.5 H1284.5 Z" fill="#fff" stroke="#333" stroke-width="1"/>
<rect x="1294.5" y="193.5" width="5" height="7" fill="#fff" stroke="#333" stroke-width="1"/>
<g id="vi">
<rect x="1303.5" y="206.5" width="15" height="6" fill="#d0d0ff" stroke="#333" stroke-width="1"/>
<path d="M1311,206.5 V212.5" stroke="#333"/>
<path d="M1303.5,214.5 H1311 V217 H1318.5 V221.5 H1303.5 Z" fill="#fff" stroke="#333" stroke-width="1"/>
</g>
<use href="#vi" y="20"/><use href="#vi" y="40"/><use href="#vi" y="60"/>
<path d="M1306.5,290 V286 M1315.5,290 V286" stroke="#333" stroke-width="1"/>
<polygon points="1304.5,287 1306.5,284.5 1308.5,287" fill="#333"/><polygon points="1313.5,287 1315.5,284.5 1317.5,287" fill="#333"/>
<path d="M1305.5,290.5 H1316.5" stroke="#333" stroke-width="1.2"/>
<rect x="1307.5" y="290.5" width="8" height="8" fill="#e8e8f8" stroke="#333" stroke-width="1"/>
<!-- 3d model icon -->
<path d="M1247,336 L1254,340 L1262,336 M1247,341 L1254,345 L1262,341 M1247,345 L1254,349 L1262,345" fill="none" stroke="#e02020" stroke-width="2"/>
<rect x="1251" y="338" width="6" height="6" fill="#8a1010"/>
<path d="M1252,333 H1258" stroke="#333" stroke-width="1" stroke-dasharray="1,1"/>
<!-- status bar grip -->
<path d="M5,826 V840" stroke="#666" stroke-width="1.5" stroke-dasharray="1.5,2"/>
<!-- command icon partial -->
<path d="M16,870 Q26,862 36,870" fill="#e8eef8" stroke="#345" stroke-width="1"/>
<!-- bottom right scroller -->
<rect x="1431.5" y="806.5" width="9" height="57" rx="2" fill="#6a6a6a" stroke="#334" stroke-width="1"/>
<path d="M1433,812 H1439 M1433,814 H1439 M1433,816 H1439 M1433,818 H1439 M1433,820 H1439 M1433,822 H1439 M1433,824 H1439 M1433,826 H1439 M1433,828 H1439 M1433,830 H1439" stroke="#333" stroke-width="1"/>
<path d="M1433,832 H1439 M1433,834 H1439 M1433,836 H1439 M1433,838 H1439 M1433,840 H1439" stroke="#c8e020" stroke-width="1"/>
<path d="M1433,842 H1439 M1433,844 H1439 M1433,846 H1439 M1433,848 H1439 M1433,850 H1439 M1433,852 H1439 M1433,854 H1439" stroke="#40d8b0" stroke-width="1"/>
</svg>
<!--/EXTRA-->
<!--TEXTS2-->
<div class="a" style="left:291px;top:160px;line-height:14px;font-size:12px;font-weight:bold;color:#333">加强筋.exb</div>
<div class="a" style="left:330px;top:804px;line-height:14px;font-size:12px;font-weight:bold;color:#333">模型</div>
<div class="a" style="left:1305px;top:186px;line-height:14px;font-size:12px;color:#000;width:116px;overflow:hidden">视图组(1)&nbsp;&nbsp;&nbsp;C:\Users\l</div>
<div class="a tv" style="top:206px">主视图(A-A)</div>
<div class="a tv" style="top:226px">左视图(B-B)</div>
<div class="a tv" style="top:246px">仰视图(C-C)</div>
<div class="a tv" style="top:266px">轴测图(D-D)</div>
<div class="a tv" style="top:286px">剖视图(E-E)</div>
<div class="a" style="left:1267px;top:333px;line-height:14px;font-size:12px;color:#111">三维模型结构(没有模型)</div>
<!--/TEXTS2-->
<!-- STATUS -->
<div class="a" style="left:1px;top:846px;width:1438px;height:1px;background:#c8c8c8"></div>
<div class="a sb" style="left:9px">命令:</div>
<div class="a sb" style="left:858px">空命令</div>
<div class="a sb" style="left:959px;font-size:10.8px">X:23.154, Y:70.446</div>
<div class="a sb" style="left:1147px">屏幕点</div>
<div class="a sb" style="left:1248px">正交</div>
<div class="a" style="left:1281px;top:848px;width:42px;height:20px;background:#999"></div>
<div class="a sb" style="left:1290px;color:#444">线宽</div>
<div class="a sb" style="left:1332px">动态输入</div>
<div class="a sb" style="left:1398px">智能</div>

<div class="a" style="left:0;top:0;width:1440px;height:870px;border:1px solid #111"></div>
</body></html>
